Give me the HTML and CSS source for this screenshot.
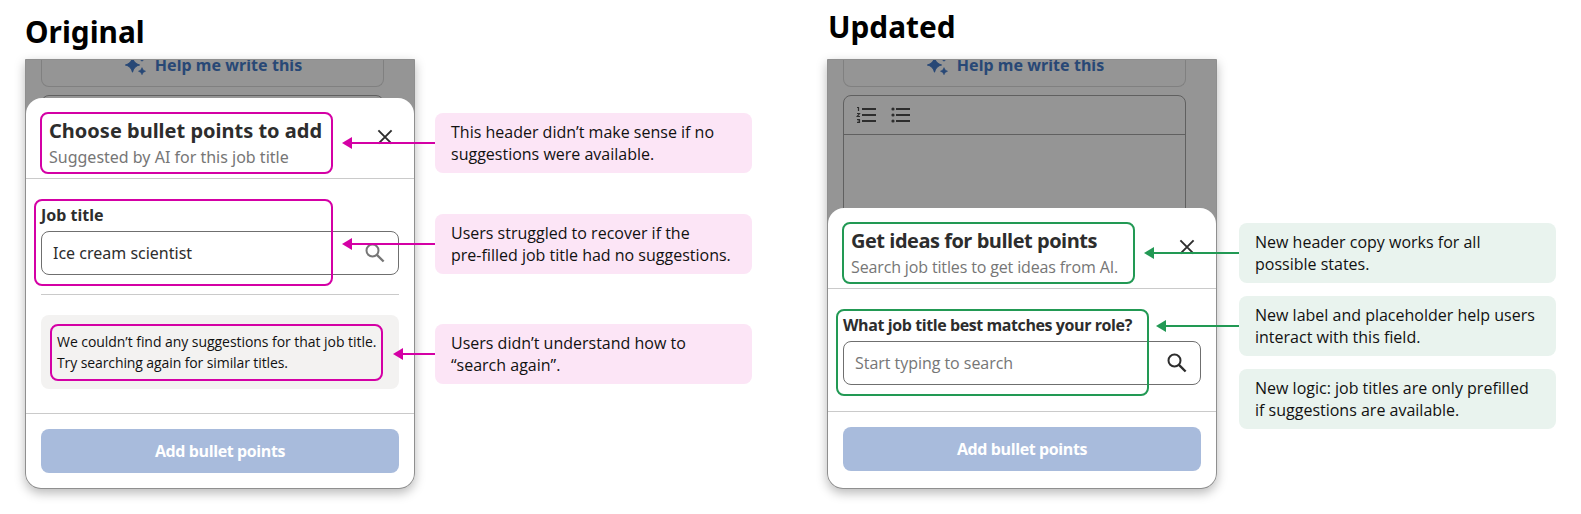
FILE: index.html
```html
<!DOCTYPE html>
<html lang="en">
<head>
<meta charset="utf-8">
<title>Original and updated</title>
<link rel="stylesheet" href="styles.css">
</head>
<body>
<svg class="defs" width="0" height="0" aria-hidden="true">
  <symbol id="sparkle" viewBox="0 0 22 22"><path d="M7.5 5 Q8.7 10.8 14.5 12 Q8.7 13.2 7.5 19 Q6.3 13.2 .5 12 Q6.3 10.8 7.5 5Z" stroke-width="1.2" stroke-linejoin="round" stroke="currentColor"/><path d="M17 14.6 Q17.6 17.6 20.6 18.2 Q17.6 18.8 17 21.8 Q16.4 18.8 13.4 18.2 Q16.4 17.6 17 14.6Z" stroke="currentColor" stroke-width=".5"/><path d="M17 4.2 Q17.4 6.4 19 7 Q17.4 7.4 17 8.8 Q16.6 7.4 15 7 Q16.6 6.4 17 4.2Z"/></symbol>
  <symbol id="close" viewBox="0 0 16 16"><path d="M1.4 1.4 14.6 14.6M14.6 1.4 1.4 14.6" fill="none" stroke="currentColor" stroke-width="1.9"/></symbol>
  <symbol id="search" viewBox="0 0 20 20"><circle cx="7.5" cy="7.5" r="6" fill="none" stroke="currentColor" stroke-width="2"/><path d="M11.7 11.7 18.6 18.5" fill="none" stroke="currentColor" stroke-width="2.4"/></symbol>
</svg>
<main class="board">
  <section class="version original">
    <h1 class="version-title">Original</h1>
    <div class="compare">
      <div class="phone">
        <div class="backdrop">
          <div class="assist"><svg class="sparkle"><use href="#sparkle"/></svg><span class="assist-text">Help me write this</span></div>
          <div class="editor"></div>
        </div>
        <div class="sheet">
          <header class="sheet-head">
            <h2 class="sheet-title">Choose bullet points to add</h2>
            <p class="sheet-sub">Suggested by AI for this job title</p>
            <svg class="close"><use href="#close"/></svg>
            <span class="mark mark-head"></span>
          </header>
          <div class="sheet-body">
            <div class="field">
              <div class="label">Job title</div>
              <div class="input"><span class="value">Ice cream scientist</span><svg class="search"><use href="#search"/></svg></div>
              <span class="mark mark-field"></span>
            </div>
            <div class="rule"></div>
            <div class="notice"><div class="notice-one">We couldn’t find any suggestions for that job title.</div><div class="notice-two">Try searching again for similar titles.</div><span class="mark mark-notice"></span></div>
          </div>
          <footer class="sheet-foot"><div class="button"><span class="button-text">Add bullet points</span></div></footer>
        </div>
      </div>
      <div class="notes">
        <div class="note point-far">This header didn’t make sense if no<br>suggestions were available.</div>
        <div class="note point-far">Users struggled to recover if the<br>pre-filled job title had no suggestions.</div>
        <div class="note point-near">Users didn’t understand how to<br>“search again”.</div>
      </div>
    </div>
  </section>
  <section class="version updated">
    <h1 class="version-title">Updated</h1>
    <div class="compare">
      <div class="phone">
        <div class="backdrop">
          <div class="assist"><svg class="sparkle"><use href="#sparkle"/></svg><span class="assist-text">Help me write this</span></div>
          <div class="editor">
            <div class="toolbar">
              <svg class="list" viewBox="0 0 20 18"><path d="M6 3H20M6 9H20M6 15H20" stroke="currentColor" stroke-width="2"/><path d="M1 1.5H2.5V5M1 7.5H3.5L1.2 10.5H4M1 13.5H3.5V16.5H1M1.5 15H3.5" fill="none" stroke="currentColor" stroke-width="1.2"/></svg>
              <svg class="list" viewBox="0 0 20 18"><path d="M6 3H20M6 9H20M6 15H20" stroke="currentColor" stroke-width="2"/><circle cx="3" cy="3" r="1.6"/><circle cx="3" cy="9" r="1.6"/><circle cx="3" cy="15" r="1.6"/></svg>
            </div>
          </div>
        </div>
        <div class="sheet">
          <header class="sheet-head">
            <h2 class="sheet-title">Get ideas for bullet points</h2>
            <p class="sheet-sub">Search job titles to get ideas from AI.</p>
            <svg class="close"><use href="#close"/></svg>
            <span class="mark mark-head"></span>
          </header>
          <div class="sheet-body">
            <div class="field">
              <div class="label">What job title best matches your role?</div>
              <div class="input"><span class="value">Start typing to search</span><svg class="search"><use href="#search"/></svg></div>
              <span class="mark mark-field"></span>
            </div>
          </div>
          <footer class="sheet-foot"><div class="button"><span class="button-text">Add bullet points</span></div></footer>
        </div>
      </div>
      <div class="notes">
        <div class="note point-far">New header copy works for all<br>possible states.</div>
        <div class="note point-near">New label and placeholder help users<br>interact with this field.</div>
        <div class="note">New logic: job titles are only prefilled<br>if suggestions are available.</div>
      </div>
    </div>
  </section>
</main>
</body>
</html>
```
FILE: styles.css
```css
* { box-sizing: border-box; }
body {
  margin: 0;
  background: #fff;
  color: #2d2d2d;
  font: 16px/24px "Noto Sans", "Open Sans", sans-serif;
}
h1, h2, p { margin: 0; }
svg { display: block; fill: currentColor; flex: none; }
.defs { position: absolute; }

.board { display: flex; gap: 75px; width: 1581px; height: 514px; padding-left: 25px; overflow: hidden; }
.version { width: 727px; --accent: #d400a5; --tint: #fce5f6; }
.updated { width: 729px; --accent: #229954; --tint: #e9f3ee; }
.version-title { height: 59px; padding-top: 11px; font-size: 29.8px; line-height: 41px; font-weight: 700; color: #000; white-space: nowrap; }
.updated .version-title { padding: 6px 0 0 1px; }
.compare { display: flex; }

.phone {
  width: 390px;
  height: 430px;
  border: 1px solid #8f8f8f;
  border-radius: 0 0 16px 16px;
  background: #959595;
  box-shadow: 0 4px 11px rgba(0, 0, 0, .28);
}
.backdrop { height: 38px; padding: 0 30px 0 15px; overflow: hidden; }
.updated .backdrop { height: 148px; }
.assist {
  display: flex;
  justify-content: center;
  height: 27px;
  border: 1px solid #808080;
  border-top: 0;
  border-radius: 0 0 8px 8px;
  color: #284876;
  font-weight: 700;
}
.sparkle { width: 22px; height: 22px; margin: -7px 8px 0 2px; }
.assist-text { margin-top: -7px; letter-spacing: .05px; white-space: nowrap; }
.editor { height: 140px; margin-top: 8px; border: 1px solid #606060; border-radius: 8px 8px 0 0; }
.toolbar { display: flex; gap: 14px; height: 39px; padding: 10px 12px 0; border-bottom: 1px solid #606060; color: #2d2d2d; }
.list { width: 20px; height: 18px; }

.sheet { border-radius: 16px 16px 15px 15px; background: #fff; }
.sheet-head { position: relative; height: 81px; padding: 19px 23px 0; border-bottom: 1px solid #cacaca; white-space: nowrap; }
.sheet-title { font-size: 20px; line-height: 28px; font-weight: 700; }
.sheet-sub { color: #767676; }
.close { position: absolute; right: 21px; top: 31px; width: 16px; height: 16px; }

.mark { position: absolute; border: 2px solid var(--accent); border-radius: 8px; pointer-events: none; }
.mark-head { left: 14px; top: 14px; width: 293px; height: 62px; }
.mark-field { left: -7px; top: -4px; width: 299px; height: 87px; }
.updated .mark-field { width: 313px; }
.mark-notice { left: 9px; top: 9px; width: 333px; height: 57px; }

.sheet-body { height: 234px; padding: 24px 15px 0; }
.updated .sheet-body { height: 122px; }
.field { position: relative; }
.label { font-weight: 700; white-space: nowrap; }
.input {
  display: flex;
  align-items: center;
  justify-content: space-between;
  height: 44px;
  margin-top: 4px;
  padding: 0 13px 0 11px;
  border: 1px solid #6f6f6f;
  border-radius: 8px;
}
.search { width: 20px; height: 20px; color: #767676; }
.updated .search { color: #2d2d2d; }
.updated .value { color: #767676; letter-spacing: -.04px; }
.rule { height: 1px; margin: 19px 0 20px; background: #cacaca; }
.notice { position: relative; height: 74px; padding: 16px 0 0 16px; border-radius: 8px; background: #f3f2f1; color: #111; font: 14px/21px "Open Sans", sans-serif; letter-spacing: -.05px; white-space: nowrap; }
.notice-two { letter-spacing: -.1px; }

.sheet-foot { padding: 15px; border-top: 1px solid #cacaca; }
.updated .sheet-foot { padding-bottom: 17px; }
.button { height: 44px; border-radius: 8px; background: #a8bbdc; color: #fff; font: 700 16px/44px "Open Sans", sans-serif; letter-spacing: -.39px; text-align: center; }

.updated .sheet-title, .updated .sheet-sub, .updated .label, .updated .value { font-family: "Open Sans", sans-serif; }
.updated .sheet-title { letter-spacing: -.48px; }
.updated .label { letter-spacing: -.41px; }
.updated .sheet-sub { letter-spacing: -.14px; }

.notes { display: flex; flex-direction: column; margin-left: 20px; padding-top: 54px; }
.note { position: relative; width: 317px; height: 60px; padding: 8px 16px; border-radius: 8px; background: var(--tint); color: #111; font: 16px/22px "Open Sans", sans-serif; white-space: nowrap; }
.original .note + .note { margin-top: 41px; }
.original .note + .note + .note { margin-top: 50px; }
.updated .notes { margin-left: 22px; padding-top: 164px; gap: 13px; }

/* Arrow from a note to the outlined area: shaft and head */
.point-far, .point-near { --reach: 93px; }
.original .point-near { --reach: 42px; }
.updated .point-far { --reach: 95px; }
.updated .point-near { --reach: 83px; }
.point-far::before, .point-near::before { content: ""; position: absolute; right: 100%; top: 29px; width: calc(var(--reach) - 8px); height: 2px; background: var(--accent); }
.point-far::after, .point-near::after { content: ""; position: absolute; left: calc(0px - var(--reach)); top: 24px; border: 6px solid transparent; border-left: 0; border-right: 10px solid var(--accent); }
```
